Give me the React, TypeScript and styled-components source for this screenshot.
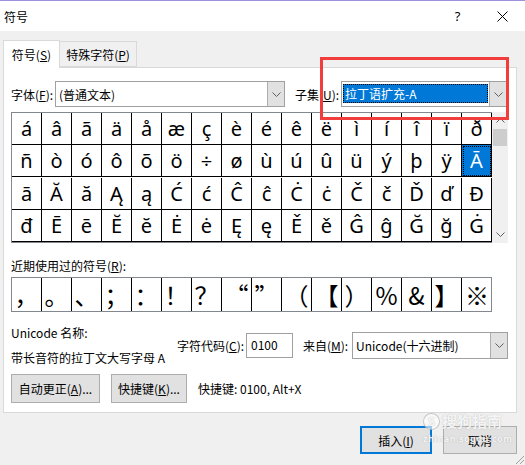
import styled, { createGlobalStyle } from 'styled-components'

const GlobalStyle = createGlobalStyle`
  html, body {
    margin: 0;
    padding: 0;
    background: #f0f0f0;
  }
  body {
    font-family: "Noto Sans CJK SC", "Noto Sans", sans-serif;
    font-size: 12px;
    color: #000;
  }
`

const gridRows = [
    'áâãäåæçèéêëìíîïð',
    'ñòóôõö÷øùúûüýþÿĀ',
    'āĂăĄąĆćĈĉĊċČčĎďĐ',
    'đĒēĔĕĖėĘęĚěĜĝĞğĠ',
]

const recent = ['，', '。', '、', '；', '：', '！', '？', '“', '”', '（', '【', '）', '%', '&', '】', '※']

const Chevron = ({ up }: { up?: boolean }) => (
    <svg width="9" height="5" viewBox="0 0 9 5">
        <polyline
            points={up ? '0.5,4.5 4.5,0.5 8.5,4.5' : '0.5,0.5 4.5,4.5 8.5,0.5'}
            fill="none"
            stroke="#606060"
            strokeWidth="1"
        />
    </svg>
)

const App = () => {
    return (
        <>
            <GlobalStyle />
            <Dialog>
                <TitleBar>
                    <Title>符号</Title>
                    <TitleButton>?</TitleButton>
                    <TitleButton>
                        <svg width="11" height="11" viewBox="0 0 11 11">
                            <path d="M0.5 0.5 L10.5 10.5 M10.5 0.5 L0.5 10.5" stroke="#000" strokeWidth="1" />
                        </svg>
                    </TitleButton>
                </TitleBar>

                <TabStrip>
                    <Tab $active>符号(<u>S</u>)</Tab>
                    <Tab>特殊字符(<u>P</u>)</Tab>
                </TabStrip>

                <Panel>
                    <FieldRow>
                        <FieldLabel $width={44}>字体(<u>F</u>):</FieldLabel>
                        <Combo $width={230} $height={26}>
                            <ComboText>(普通文本)</ComboText>
                            <ComboButton><Chevron /></ComboButton>
                        </Combo>
                        <FieldLabel $width={46} $gap={10}>子集(<u>U</u>):</FieldLabel>
                        <Combo $width={166} $height={26}>
                            <SelectedText>拉丁语扩充-A</SelectedText>
                            <ComboButton><Chevron /></ComboButton>
                        </Combo>
                    </FieldRow>

                    <GridWrap>
                        <SymbolGrid>
                            {gridRows.map((row, r) =>
                                Array.from(row).map((ch, c) => (
                                    <SymbolCell key={`${r}-${c}`} $selected={r === 1 && c === 15}>
                                        {ch}
                                    </SymbolCell>
                                ))
                            )}
                        </SymbolGrid>
                        <ScrollBar>
                            <ScrollArrow><Chevron up /></ScrollArrow>
                            <ScrollThumb />
                            <ScrollTrack />
                            <ScrollArrow><Chevron /></ScrollArrow>
                        </ScrollBar>
                    </GridWrap>

                    <RecentLabel>近期使用过的符号(<u>R</u>):</RecentLabel>
                    <RecentRow>
                        {recent.map((ch, i) => (
                            <RecentCell key={i}>{ch}</RecentCell>
                        ))}
                    </RecentRow>

                    <InfoRow>
                        <NameBlock>
                            <div>Unicode 名称:</div>
                            <div>带长音符的拉丁文大写字母 A</div>
                        </NameBlock>
                        <FieldLabel $width={69}>字符代码(<u>C</u>):</FieldLabel>
                        <CodeInput>0100</CodeInput>
                        <FieldLabel $width={49} $gap={10}>来自(<u>M</u>):</FieldLabel>
                        <Combo $width={156} $height={27}>
                            <ComboText>Unicode(十六进制)</ComboText>
                            <ComboButton><Chevron /></ComboButton>
                        </Combo>
                    </InfoRow>

                    <ButtonRow>
                        <Button $width={89} $height={29}>自动更正(<u>A</u>)...</Button>
                        <Button $width={76} $height={29}>快捷键(<u>K</u>)...</Button>
                        <Hint>快捷键: 0100, Alt+X</Hint>
                    </ButtonRow>
                </Panel>

                <Footer>
                    <Button $width={72} $height={28} $default>插入(<u>I</u>)</Button>
                    <Button $width={74} $height={28}>取消</Button>
                </Footer>

                <Highlight />

                <Watermark>
                    <MarkLine>
                        <MarkBadge>S</MarkBadge>搜狗指南
                    </MarkLine>
                    <MarkUrl>zhinan.sogou.com</MarkUrl>
                </Watermark>

                <Grip width="12" height="12" viewBox="0 0 12 12">
                    <path d="M11 3 L3 11 M11 7 L7 11" stroke="#a0a0a0" strokeWidth="1" />
                </Grip>
            </Dialog>
        </>
    )
}

const Dialog = styled.div`
    position: relative;
    width: 525px;
    height: 465px;
    box-sizing: border-box;
    border-top: 1px solid #9d92de;
    background: #f0f0f0;
    overflow: hidden;
`

const TitleBar = styled.div`
    height: 30px;
    background: #fff;
    display: flex;
    align-items: center;
    padding-left: 4px;
`

const Title = styled.div`
    flex: 1;
    font-size: 12px;
`

const TitleButton = styled.div`
    width: 45px;
    height: 30px;
    display: flex;
    align-items: center;
    justify-content: center;
    font-family: "Noto Sans", sans-serif;
    font-size: 13px;
`

const TabStrip = styled.div`
    display: flex;
    align-items: flex-end;
    padding: 9px 0 0 3px;
    margin-bottom: -1px;
`

const Tab = styled.div<{ $active?: boolean }>`
    position: relative;
    z-index: 1;
    box-sizing: border-box;
    display: flex;
    align-items: center;
    justify-content: center;
    border: 1px solid #d9d9d9;
    border-bottom: ${p => (p.$active ? 'none' : '1px solid #d9d9d9')};
    border-left: ${p => (p.$active ? '1px solid #d9d9d9' : 'none')};
    width: ${p => (p.$active ? '57px' : '77px')};
    height: ${p => (p.$active ? '28px' : '26px')};
    background: ${p => (p.$active ? '#fff' : '#f0f0f0')};
    margin-bottom: ${p => (p.$active ? '0' : '1px')};
    font-size: 12px;
`

const Panel = styled.div`
    margin-left: 3px;
    width: 514px;
    height: 346px;
    box-sizing: border-box;
    border: 1px solid #d9d9d9;
    background: #fff;
    padding: 13px 0 0 7px;
`

const FieldRow = styled.div`
    display: flex;
    align-items: center;
    height: 26px;
`

const FieldLabel = styled.div<{ $width: number; $gap?: number }>`
    width: ${p => p.$width}px;
    margin-left: ${p => p.$gap || 0}px;
    white-space: nowrap;
    font-size: 12px;
`

const Combo = styled.div<{ $width: number; $height: number }>`
    width: ${p => p.$width}px;
    height: ${p => p.$height}px;
    box-sizing: border-box;
    border: 1px solid #a0a0a0;
    background: #fff;
    display: flex;
    align-items: stretch;
`

const ComboText = styled.div`
    flex: 1;
    display: flex;
    align-items: center;
    padding-left: 3px;
    white-space: nowrap;
`

const SelectedText = styled.div`
    flex: 1;
    display: flex;
    align-items: center;
    margin: 2px 1px 3px 1px;
    padding-left: 2px;
    background: #0078d7;
    color: #fff;
    outline: 1px dotted #000;
    outline-offset: -1px;
    font-size: 12px;
`

const ComboButton = styled.div`
    width: 16px;
    background: #e1e1e1;
    border-left: 1px solid #adadad;
    display: flex;
    align-items: center;
    justify-content: center;
`

const GridWrap = styled.div`
    display: flex;
    margin-top: 5px;
`

const SymbolGrid = styled.div`
    display: grid;
    grid-template-columns: repeat(16, 30px);
    border: 1px solid #828790;
    border-right: none;
`

const SymbolCell = styled.div<{ $selected?: boolean }>`
    height: 32px;
    box-sizing: border-box;
    border-right: 1px solid #000;
    border-bottom: 1px solid #000;
    display: flex;
    align-items: center;
    justify-content: center;
    font-family: "Noto Sans", sans-serif;
    font-size: 20px;
    background: ${p => (p.$selected ? '#0078d7' : '#fff')};
    color: ${p => (p.$selected ? '#fff' : '#000')};
    outline: ${p => (p.$selected ? '1px dotted #000' : 'none')};
    outline-offset: -2px;
`

const ScrollBar = styled.div`
    width: 16px;
    height: 131px;
    background: #f0f0f0;
    display: flex;
    flex-direction: column;
`

const ScrollArrow = styled.div`
    height: 17px;
    display: flex;
    align-items: center;
    justify-content: center;
`

const ScrollThumb = styled.div`
    height: 17px;
    margin: 0 1px;
    background: #cdcdcd;
`

const ScrollTrack = styled.div`
    flex: 1;
`

const RecentLabel = styled.div`
    margin-top: 14px;
    height: 18px;
    line-height: 18px;
`

const RecentRow = styled.div`
    margin-top: 2px;
    display: grid;
    grid-template-columns: repeat(16, 30px);
    width: 479px;
    border: 1px solid #828790;
`

const RecentCell = styled.div`
    height: 33px;
    box-sizing: border-box;
    border-right: 1px solid #000;
    text-align: center;
    line-height: 33px;
    font-family: "Noto Sans CJK SC", sans-serif;
    font-size: 24px;
    overflow: hidden;

    &:last-child {
        border-right: none;
    }
`

const InfoRow = styled.div`
    margin-top: 8px;
    display: flex;
    align-items: center;
`

const NameBlock = styled.div`
    width: 166px;
    line-height: 25px;
    white-space: nowrap;
`

const CodeInput = styled.div`
    width: 47px;
    height: 25px;
    box-sizing: border-box;
    border: 1px solid #a0a0a0;
    padding: 3px 0 0 4px;
    line-height: 16px;
`

const ButtonRow = styled.div`
    margin-top: 4px;
    display: flex;
    align-items: center;
    gap: 11px;
`

const Button = styled.div<{ $width: number; $height: number; $default?: boolean }>`
    width: ${p => p.$width}px;
    height: ${p => p.$height}px;
    box-sizing: border-box;
    background: #e1e1e1;
    border: ${p => (p.$default ? '2px solid #0078d7' : '1px solid #adadad')};
    display: flex;
    align-items: center;
    justify-content: center;
    white-space: nowrap;
    font-size: 12px;
`

const Hint = styled.div`
    white-space: nowrap;
`

const Footer = styled.div`
    display: flex;
    justify-content: flex-end;
    gap: 11px;
    padding: 13px 8px 0 0;
`

/* red annotation box drawn over the subset field */
const Highlight = styled.div`
    position: absolute;
    left: 320px;
    top: 56px;
    width: 189px;
    height: 63px;
    box-sizing: border-box;
    border: 3px solid #f23d3d;
    pointer-events: none;
`

const Watermark = styled.div`
    position: absolute;
    left: 423px;
    top: 411px;
    color: rgba(255, 255, 255, 0.9);
    text-shadow: 0 0 1px rgba(120, 120, 120, 0.6);
    pointer-events: none;
`

const MarkLine = styled.div`
    display: flex;
    align-items: center;
    font-size: 15px;
    line-height: 18px;
    font-weight: bold;
`

const MarkBadge = styled.span`
    width: 15px;
    height: 15px;
    border-radius: 50%;
    border: 1px solid rgba(150, 150, 150, 0.5);
    background: rgba(255, 255, 255, 0.6);
    display: inline-flex;
    align-items: center;
    justify-content: center;
    font-size: 11px;
    margin-right: 2px;
`

const MarkUrl = styled.div`
    font-family: "Noto Sans", sans-serif;
    font-size: 9px;
    font-weight: bold;
    letter-spacing: 0.5px;
    margin-top: 2px;
`

const Grip = styled.svg`
    position: absolute;
    right: 0;
    bottom: 0;
`

export default App
